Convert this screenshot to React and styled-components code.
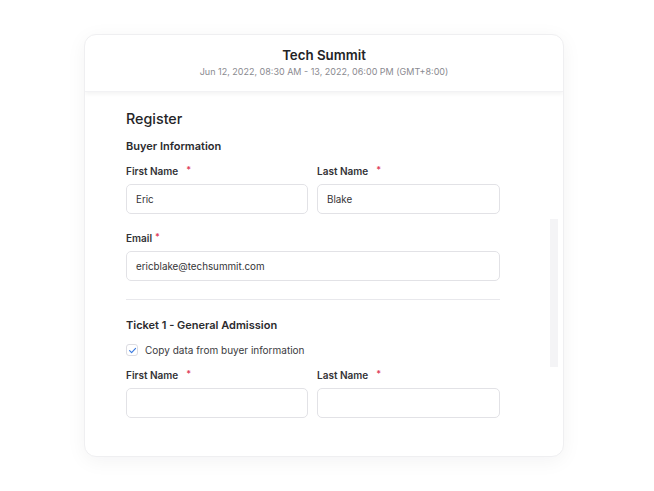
import React from 'react';
import styled, { createGlobalStyle } from 'styled-components';

const GlobalStyle = createGlobalStyle`
  html, body {
    margin: 0;
    padding: 0;
    background: #ffffff;
    font-family: Inter, 'Noto Sans', sans-serif;
    color: #2b2b2e;
  }
`;

const Page = styled.div`
  width: 654px;
  height: 491px;
  padding-top: 34px;
  box-sizing: border-box;
  display: flex;
  justify-content: center;
`;

const Card = styled.div`
  width: 480px;
  height: 423px;
  margin-left: -6px;
  background: #fff;
  border: 1px solid #efeff1;
  border-radius: 12px;
  box-shadow: 0 4px 20px rgba(20, 20, 40, 0.05);
  box-sizing: border-box;
  display: flex;
  flex-direction: column;
  overflow: hidden;
`;

const Header = styled.div`
  height: 57px;
  flex-shrink: 0;
  box-sizing: border-box;
  padding-top: 11px;
  display: flex;
  flex-direction: column;
  align-items: center;
  box-shadow: 0 2px 4px rgba(0, 0, 0, 0.05);
  border-bottom: 1px solid #f2f2f4;
  position: relative;
  z-index: 1;
`;

const EventTitle = styled.div`
  font-size: 13.3px;
  font-weight: 600;
  color: #232326;
  line-height: 18px;
`;

const EventDate = styled.div`
  font-size: 9px;
  color: #8a8a90;
  line-height: 14px;
  margin-top: 1px;
`;

const Body = styled.div`
  flex: 1;
  position: relative;
  padding: 17px 0 0 41px;
`;

const Scrollbar = styled.div`
  position: absolute;
  right: 5px;
  top: 127px;
  width: 8px;
  height: 148px;
  background: #f4f4f6;
`;

const Form = styled.div`
  width: 374px;
  display: flex;
  flex-direction: column;
`;

const FormTitle = styled.div`
  font-size: 14.3px;
  font-weight: 500;
  line-height: 20px;
  color: #242427;
`;

const SectionTitle = styled.div`
  font-size: 11px;
  font-weight: 600;
  line-height: 16px;
  color: #2b2b2e;
  margin-top: ${p => p.$top}px;
`;

const Row = styled.div`
  display: grid;
  grid-template-columns: 182px 183px;
  column-gap: 9px;
  margin-top: ${p => p.$top}px;
`;

const Field = styled.div`
  display: flex;
  flex-direction: column;
  margin-top: ${p => p.$top || 0}px;
`;

const Label = styled.div`
  font-size: 10px;
  font-weight: 600;
  line-height: 16px;
  color: #333336;
  display: flex;
  align-items: center;
  gap: ${p => p.$gap}px;
`;

const Required = styled.span`
  color: #e0405a;
  font-size: 9px;
  font-weight: 600;
  position: relative;
  top: -1px;
`;

const Input = styled.div`
  height: 30px;
  margin-top: 5px;
  border: 1px solid #e2e2e6;
  border-radius: 5px;
  box-sizing: border-box;
  padding: 0 9px;
  display: flex;
  align-items: center;
  font-size: 9.8px;
  color: #333336;
  background: #fff;
`;

const Divider = styled.div`
  height: 1px;
  background: #e8e8ec;
  margin-top: 18px;
`;

const CheckRow = styled.label`
  display: flex;
  align-items: center;
  gap: 7px;
  margin-top: 9px;
  height: 16px;
  font-size: 10px;
  color: #3a3a3e;
`;

const CheckBox = styled.span`
  width: 12px;
  height: 12px;
  border: 1px solid #dcdce2;
  border-radius: 3px;
  box-sizing: border-box;
  display: flex;
  align-items: center;
  justify-content: center;
  background: #fff;
`;

const FieldPair = ({ top, first, last }) => (
  <Row $top={top}>
    <Field>
      <Label $gap={8}>First Name <Required>*</Required></Label>
      <Input>{first}</Input>
    </Field>
    <Field>
      <Label $gap={8}>Last Name <Required>*</Required></Label>
      <Input>{last}</Input>
    </Field>
  </Row>
);

export default function App() {
  return (
    <>
      <GlobalStyle />
      <Page>
        <Card>
          <Header>
            <EventTitle>Tech Summit</EventTitle>
            <EventDate>Jun 12, 2022, 08:30 AM - 13, 2022, 06:00 PM (GMT+8:00)</EventDate>
          </Header>
          <Body>
            <Scrollbar />
            <Form>
              <FormTitle>Register</FormTitle>
              <SectionTitle $top={9}>Buyer Information</SectionTitle>
              <FieldPair top={9} first="Eric" last="Blake" />
              <Field $top={16}>
                <Label $gap={3}>Email <Required>*</Required></Label>
                <Input>ericblake@techsummit.com</Input>
              </Field>
              <Divider />
              <SectionTitle $top={17}>Ticket 1 - General Admission</SectionTitle>
              <CheckRow>
                <CheckBox>
                  <svg width="9" height="9" viewBox="0 0 10 10" fill="none">
                    <path d="M1.8 5.2 L4 7.3 L8.4 2.6" stroke="#3b7be0" strokeWidth="1.3" strokeLinecap="round" strokeLinejoin="round" />
                  </svg>
                </CheckBox>
                Copy data from buyer information
              </CheckRow>
              <FieldPair top={9} first="" last="" />
            </Form>
          </Body>
        </Card>
      </Page>
    </>
  );
}
